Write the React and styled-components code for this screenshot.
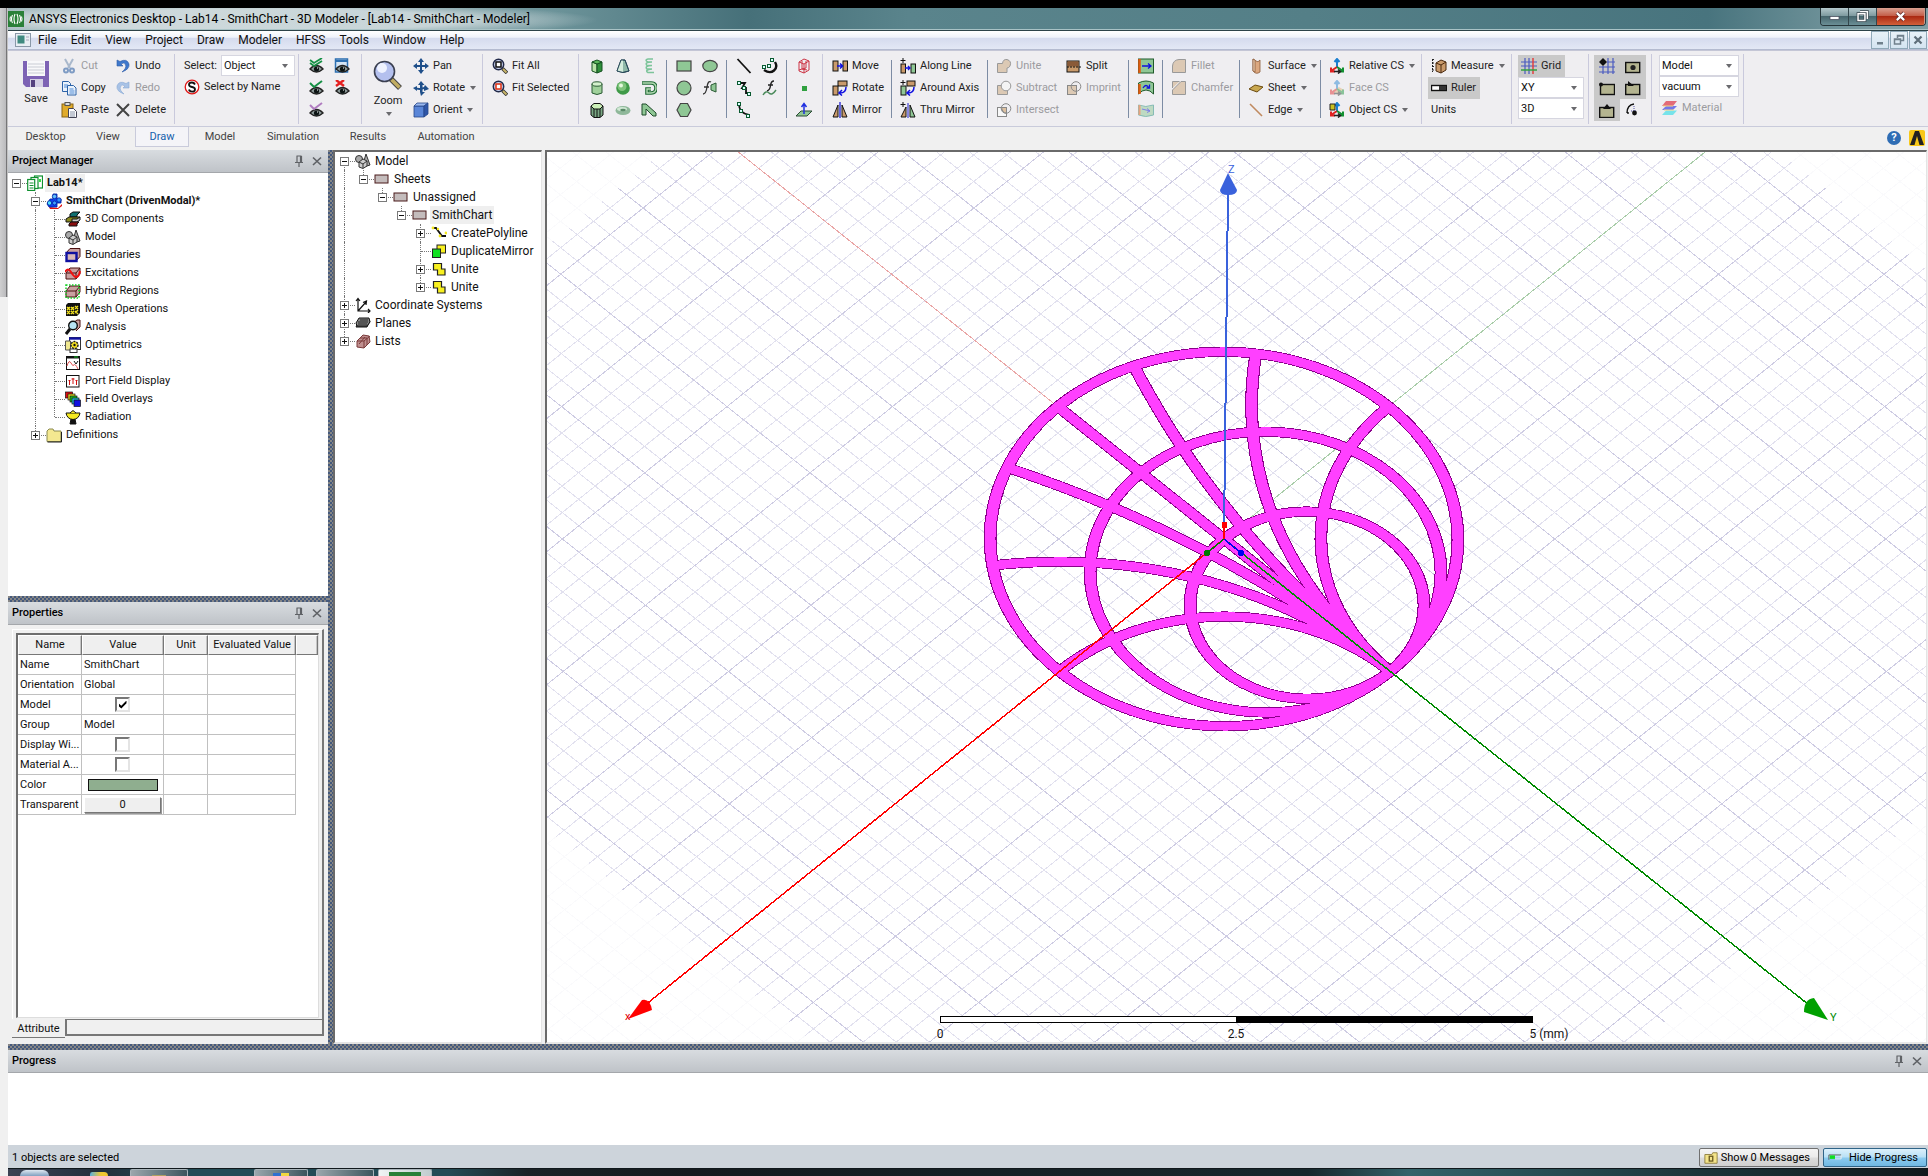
import React from "react";
import styled, { createGlobalStyle, css } from "styled-components";

const GlobalStyle = createGlobalStyle`
  * { box-sizing: border-box; }
  html, body, #root { height: 100%; margin: 0; }
  body {
    background: #f0f0f0;
    color: #111;
    font: 11px/16px Roboto, "Liberation Sans", sans-serif;
    overflow: hidden;
  }
  button, select, input { font: inherit; color: inherit; margin: 0; }
  svg { display: block; flex: none; }
`;

/* ---------------------------------------------------------------- icons */

const G = "#8fc795";
const T = "#c99a6b";
const eye = (
  <g>
    <path d="M2 11Q8.500 4 15 11Q8.500 17 2 11Z" fill="#8f9c9c" stroke="#222" strokeWidth="1.400" />
    <circle cx="8.500" cy="11" r="2.600" fill="#0c1414" />
    <path d="M9 10h1" stroke="#fff" />
  </g>
);
const lens = (fill) => (
  <g>
    <circle cx="6.5" cy="6.500" r="5.200" fill="#c9d3f0" stroke="#222a4a" strokeWidth="1.500" />
    <path d="M10.500 10.500L15 15" stroke="#333" strokeWidth="3.500" />
    <path d="M11 11L14.500 14.500" stroke="#c9b66a" strokeWidth="2" />
    {fill && <rect x="4" y="4" width="5" height="5" fill="#fff" stroke={fill} strokeWidth="1.500" />}
  </g>
);
const node = (x, y) => <rect x={x - 1.5} y={y - 1.5} width="3" height="3" fill="#dff" stroke="#0a5a30" />;
const plus = <path d="M3 0v5M.5 2.500h5" stroke="#111" />;
const csAxes = (
  <g fill="none" strokeWidth="2">
    <path d="M8 10V2M5.500 4L8 1l2.500 3" stroke="#1a7fd0" />
    <path d="M8 9l-6 4M2 9.500V13.500h4" stroke="#e02020" />
    <path d="M8 9l6 4M14 9.500v4h-4" stroke="#109030" />
    <path d="M5 13.500h6M9 11.500l2.500 2-2.500 2" stroke="#222" strokeWidth="1.500" />
  </g>
);
const redBlock = (
  <g fill="#c9a0a0" stroke="#4a1010">
    <path d="M1 8L5 3H15V9L11 14H1Z" />
    <path d="M1 8H11L15 3M11 8V14" fill="none" />
  </g>
);

const ICONS = {
  cut: <g fill="none" strokeWidth="2"><path d="M4 1l5 9M12 1L7 10" stroke="#a9b8cc" /><circle cx="5" cy="12.500" r="2" stroke="#7f9cc4" /><circle cx="11" cy="12.500" r="2" stroke="#7f9cc4" /></g>,
  copy: <g stroke="#2d63a8" fill="#eaf2fc"><path d="M1.500 1.500h6l2 2v8h-8z" /><path d="M6.500 5.500h6l2.500 2.500v7h-8.500z" /><path d="M3 5h4M3 7h3M8.500 9h4M8.500 11h5M8.500 13h5" stroke="#4f8ad4" /></g>,
  paste: <g><rect x="1" y="2" width="11" height="13" fill="#e0ab2b" stroke="#8a6414" /><rect x="4" y="0.500" width="5" height="3" fill="#ddd" stroke="#555" /><path d="M7.500 6.500h5l3 3v6h-8z" fill="#fff" stroke="#445" /><path d="M9 10h5M9 12h5M9 14h5" stroke="#8893a8" /></g>,
  undo: <path d="M2 2v6h6L6 6Q9 4 10.500 6.500Q12 10 7 14Q15 11 14 6Q12 0 5 3.500Z" fill="#3f78cc" stroke="#2d5aa6" strokeWidth=".6" />,
  redo: <path d="M14 2v6H8L10 6Q7 4 5.500 6.500Q4 10 9 14Q1 11 2 6Q4 0 11 3.500Z" fill="#a8c2e6" stroke="#88a8d4" strokeWidth=".6" />,
  del: <path d="M2 2L14 14M14 2L2 14" stroke="#444" strokeWidth="2" />,
  selName: <g><circle cx="8" cy="8" r="6.800" fill="#fff" stroke="#e01818" strokeWidth="1.300" /><path d="M11 5.500Q10 3.500 8 3.500Q5 3.500 5 5.700Q5 7.400 8 8Q11 8.600 11 10.400Q11 12.600 8 12.600Q5.500 12.600 5 10.500" fill="none" stroke="#111" strokeWidth="1.800" /></g>,
  eyeAll: <g>{eye}<path d="M2 5l4 3 8-5M2 2l4 3 8-5" fill="none" stroke="#159045" strokeWidth="1.800" /></g>,
  eyeOne: <g>{eye}<path d="M2 3l4 4 8-6" fill="none" stroke="#159045" strokeWidth="2" /></g>,
  eyeVio: <g>{eye}<path d="M2 3l4 4 8-6" fill="none" stroke="#b07cc0" strokeWidth="2" /></g>,
  eyeWin: <g><rect x="1.500" y="1" width="12" height="13" fill="#d4e4f4" stroke="#2d6fb0" strokeWidth="1.500" /><path d="M2 3h11" stroke="#2d6fb0" strokeWidth="2" />{eye}</g>,
  eyeDel: <g>{eye}<path d="M2 0l8 6M10 0L2 6" stroke="#e42020" strokeWidth="2.400" /></g>,
  pan: <g fill="#1f4f8a"><path d="M7 3h2v10H7zM3 7h10v2H3z" /><path d="M8 0l3 4H5zM8 16l3-4H5zM0 8l4-3v6zM16 8l-4-3v6z" /></g>,
  rotView: <g fill="#1f4f8a"><path d="M5 5L8 1l3.500 4H9.500v7H7V5zM12 5l4 4-5 2V9Q6 11 3 9l-1-2q4 2 9 0z" /><path d="M0 8l4-2v5zM7 12h5l-4 4z" /></g>,
  orient: <g stroke="#27468c" strokeWidth=".8"><path d="M1 4h10v11H1z" fill="#5a86d8" /><path d="M1 4l3-3h11l-4 3z" fill="#9ab8ee" /><path d="M15 1v11l-4 3V4z" fill="#2f56a8" /></g>,
  fitAll: lens("#111"),
  fitSel: lens("#e03010"),
  box: <g stroke="#145020"><path d="M3 4l5 2v9l-5-2z" fill="#b8e2a8" /><path d="M8 6l5-2v9l-5 2z" fill="#2f8f3a" /><path d="M3 4l5-2 5 2-5 2z" fill="#5cb85c" /></g>,
  cone: <g stroke="#2a4a5a"><path d="M6 2h4l4 11q-6 3-12 0z" fill="#8fb8a8" /><path d="M6 2h2v12q-4 0-6-1z" fill="#d4ecdc" stroke="none" /><path d="M6 2h4l4 11q-6 3-12 0z" fill="none" /></g>,
  helix: <path d="M12 1H7Q3 2 7 4H11M11 4Q3 4 6 7.500H11M11 7.500Q3 8 6 11H11M11 11Q3 12 7 14.500H13" fill="none" stroke="#7cc49a" strokeWidth="1.500" />,
  cyl: <g stroke="#2a5a34"><path d="M3 4v9q5 3 10 0V4" fill="#9fd09a" /><ellipse cx="8" cy="4" rx="5" ry="2.200" fill="#d4f0cc" /></g>,
  sphere: <g><circle cx="8" cy="8" r="6.800" fill="#3f9a48" /><circle cx="7" cy="6.500" r="4.500" fill="#7fc47c" /><circle cx="6" cy="5.500" r="2" fill="#e4f8dc" /></g>,
  spiral: <g fill="none"><path d="M1 3h9q5 0 5 5t-5 5H6V9h4" stroke="#1f6a34" strokeWidth="3.600" /><path d="M1.500 3H10q5 0 5 5t-5 5H6V9h4" stroke="#b4dcb4" strokeWidth="1.400" /></g>,
  prism: <g stroke="#111"><path d="M2 4v9l3 2.500h6l3-2.500V4" fill="#7aa884" /><path d="M5 7v8M8 7v8M11 7v8" /><path d="M2 4l3-2.500h6L14 4l-3 3H5z" fill="#ccf0b8" /></g>,
  torus: <g><ellipse cx="8" cy="8.500" rx="7.500" ry="4.500" fill="#8fb89a" /><ellipse cx="7" cy="7" rx="5" ry="2" fill="#d0e8d4" /><ellipse cx="8" cy="8" rx="2.800" ry="1.200" fill="#5a8a68" /></g>,
  bend: <path d="M1 13V2h4l10 9v3h-3L5 7v6z" fill={G} stroke="#1f4a2a" />,
  rect: <rect x="1" y="3" width="14" height="10" fill={G} stroke="#444" strokeWidth="1.200" />,
  ellipse: <ellipse cx="8" cy="8" rx="7.200" ry="5.600" fill={G} stroke="#444" strokeWidth="1.200" />,
  circle: <circle cx="8" cy="8" r="7" fill={G} stroke="#444" strokeWidth="1.200" />,
  fxSurf: <g><path d="M9 5l5-2v9l-5-2z" fill={G} stroke="#2a5a34" /><path d="M1 14Q4 14 5 7T9 2M2 7h5" fill="none" stroke="#333" strokeWidth="1.300" /></g>,
  hexa: <path d="M4.500 1.500h7L15 8l-3.500 6.500h-7L1 8z" fill={G} stroke="#444" strokeWidth="1.200" />,
  line: <path d="M1.500 1L14.500 15" stroke="#111" strokeWidth="1.800" />,
  arc3: <g><path d="M13 4q3 5-1 8.500T2 12" fill="none" stroke="#111" strokeWidth="2.400" />{node(10, 2)}{node(2, 9)}{node(7, 8)}</g>,
  spline: <g><path d="M3 3h6l-3 5h4v5h4" fill="none" stroke="#111" strokeWidth="1.800" />{node(3, 3)}{node(8, 8)}{node(13, 14)}</g>,
  fxCurve: <g fill="none"><path d="M5 11Q8 10 8.500 5.500T12 1M6 5h5" stroke="#222" strokeWidth="1.400" /><path d="M1 15q3-5 6-2t7-3" stroke="#4a8a5a" strokeWidth="1.400" /></g>,
  arcC: <g><path d="M3 2q0 9 10 11" fill="none" stroke="#111" strokeWidth="1.800" />{node(3, 2)}{node(5, 9)}{node(12, 14)}</g>,
  cage: <g fill="none" stroke="#cc3344"><path d="M3 4l5-3 5 2v9l-5 3-5-2zM3 4l5 2 5-3M8 6v9" /><path d="M6 3v8l4-1V3M3 12l3-1 5 1" /></g>,
  point: <rect x="6" y="6" width="5" height="5" fill="#30a040" />,
  plane: <g><path d="M5 9h11l-5 5H0z" fill={G} stroke="#2a4a34" /><path d="M8 12V3M5.500 5L8 1.500 10.500 5" fill="none" stroke="#2030e0" strokeWidth="1.500" /></g>,
  move: <g stroke="#111"><rect x="1" y="3" width="5" height="10" fill={T} /><rect x="11" y="3" width="4.500" height="10" fill={T} /><path d="M5 8h6M8 5.500L10.500 8 8 10.500" stroke="#1010e0" strokeWidth="1.500" fill="none" /></g>,
  rotate: <g stroke="#111"><rect x="6" y="1" width="9" height="5" fill={T} /><rect x="1" y="6" width="5" height="9" fill={T} /><path d="M14 7q0 6-6 6M10 10l-3 3 3 2.500" stroke="#1010e0" strokeWidth="1.500" fill="none" /></g>,
  mirror: <g><path d="M6 3v12H1z" fill={T} stroke="#111" /><path d="M10 3v12h5z" fill={T} stroke="#111" /><path d="M8 0v16" stroke="#2020d0" strokeWidth="1.300" /></g>,
  dupLine: <g stroke="#111">{plus}<rect x="1" y="6" width="4.500" height="9" fill={T} /><rect x="11" y="6" width="4.500" height="9" fill={G} /><path d="M5 10h5M8 8l2 2-2 2" stroke="#1010e0" fill="none" strokeWidth="1.300" /></g>,
  dupAxis: <g stroke="#111">{plus}<rect x="7" y="1" width="8" height="5" fill={T} /><rect x="1" y="6" width="5" height="9" fill={G} /><path d="M14 7q0 6-6 6M10 10l-3 3 3 2.500" stroke="#1010e0" strokeWidth="1.500" fill="none" /></g>,
  dupMirror: <g>{plus}<path d="M6 5v10H1z" fill={T} stroke="#111" /><path d="M10 3v12h5z" fill={G} stroke="#111" /><path d="M8 1v15" stroke="#2020d0" /></g>,
  unite: <path d="M1.500 5.500h5Q7 1 11 1.500Q16 3 14 8Q13 10 11 10v4.500H1.500z" fill="#dcc9b4" stroke="#999" />,
  subtract: <g stroke="#999"><path d="M1.500 5.500h10v9h-10z" fill="#dcc9b4" /><circle cx="10" cy="6" r="4.800" fill="#f4f4f4" /></g>,
  intersect: <g stroke="#888"><rect x="1.500" y="5.500" width="9" height="9" fill="#f8f8f8" /><circle cx="10" cy="6.500" r="4.800" fill="none" /><path d="M5.500 5.500h5v5.500q-4 0-5-5.500z" fill="#dcc0a0" /></g>,
  imprint: <g stroke="#888"><rect x="1.500" y="5.500" width="9" height="9" fill="#dcc9b4" /><circle cx="10" cy="6.500" r="4.800" fill="none" /></g>,
  split: <g><rect x="1" y="3" width="12" height="11" fill={T} stroke="#111" /><rect x="1.500" y="3.500" width="11" height="5" fill="#8a5a38" /><path d="M1 9h15" stroke="#111" strokeDasharray="2 1" /></g>,
  sweepA: <g><rect x=".5" y="1" width="15" height="14" fill={G} stroke="#1f5a2a" /><path d="M1.500 1v14" stroke="#e05a10" strokeWidth="2.500" /><path d="M4 8h9M10 5.500L13 8l-3 2.500" stroke="#1010e0" fill="none" strokeWidth="1.300" /></g>,
  sweepB: <g><path d="M.5 3Q8-1 15.500 3V14Q12 10 8 10T.5 14z" fill={G} stroke="#1f5a2a" /><path d="M1.500 4v10" stroke="#e05a10" strokeWidth="2.500" /><path d="M5 8q3-5 6 0M11.500 4.500V8H8.500" stroke="#1010e0" fill="none" strokeWidth="1.300" /></g>,
  sweepC: <g opacity=".5"><path d="M.5 3q7 3 15 0v10q-8 3-15 0z" fill={G} stroke="#1f8a7a" /><path d="M1.500 3v10" stroke="#e05a10" strokeWidth="2" /><path d="M4 7l8 2M9 6.500l3 2.500-3 1.500" stroke="#1010e0" fill="none" /></g>,
  fillet: <path d="M1.500 14.500V8Q2 2 8 1.500h6.500v13z" fill="#dcc9b4" stroke="#999" />,
  chamfer: <path d="M1.500 14.500V10L10 1.500h4.500v13z M1.500 8V1.500h7" fill="#dcc9b4" stroke="#999" />,
  surface: <g stroke="#8a5a3a" strokeWidth=".8"><path d="M5 1v12q3 4 7 1V2q-2 3-4 1z" fill="#dca880" /><path d="M5 1v12l2 1V2z" fill="#f4d8bc" /></g>,
  sheet: <path d="M1 9l6-4 8 2-6 5z" fill="#c9a850" stroke="#6a4a10" />,
  edge: <path d="M2 2L14 14" stroke="#c08a60" strokeWidth="1.600" />,
  relCS: csAxes,
  faceCS: <g opacity=".45"><path d="M3 11l7-4 5 3-6 5z" fill="#e0b070" />{csAxes}</g>,
  objCS: <g>{csAxes}<path d="M1 2h5v6H1z" fill="#c9c020" stroke="#222" /></g>,
  measure: <g><path d="M1 1.500h2M1 5h2M1 8.500h2M1 12h2M1.500 1v13" stroke="#222" strokeDasharray="2 1" /><path d="M5 5l5-3 5 2v8l-5 3-5-2z" fill={T} stroke="#4a2a10" /><path d="M5 5l5 2 5-3M10 7v8" stroke="#4a2a10" fill="none" /></g>,
  ruler: <g><rect x=".5" y="5.500" width="15" height="5" fill="#fff" stroke="#111" strokeWidth="1.400" /><rect x="8" y="6" width="7" height="4" fill="#333" /></g>,
  grid: <g strokeWidth="1.200"><path d="M4 0v16M8 0v16M0 4h16M0 8h16" stroke="#4a5ac0" /><path d="M12 0v16" stroke="#e04040" strokeWidth="1.500" /><path d="M0 12h16" stroke="#30a040" strokeWidth="1.500" /></g>,
  snapGrid: <g><path d="M9 0v16M14 0v16M4 8v8M8 4h8M0 9h16M0 14h16" stroke="#4a5ac0" strokeWidth="1.200" /><path d="M4 0l4 4-4 4-4-4z" fill="#111" /></g>,
  snapC: <g><rect x=".7" y="4.500" width="14" height="10" fill="#b4b490" stroke="#111" strokeWidth="1.400" /><circle cx="8" cy="9.500" r="2.600" fill="#222" /></g>,
  snapV: <g><rect x="1.500" y="4.500" width="14" height="10" fill="#b4b490" stroke="#111" strokeWidth="1.400" /><circle cx="2" cy="4.500" r="2" fill="#111" /></g>,
  snapE: <g><rect x=".7" y="4.500" width="14" height="10" fill="#b4b490" stroke="#111" strokeWidth="1.400" /><path d="M3 1l6 5H3z" fill="#111" /></g>,
  snapM: <g><rect x=".7" y="5.500" width="14" height="10" fill="#b4b490" stroke="#111" strokeWidth="1.400" /><path d="M8 2l4 5H4z" fill="#111" /></g>,
  snapQ: <g><path d="M2 11Q2 3 9 2M3 12v-2" fill="none" stroke="#111" strokeWidth="1.400" /><path d="M6 9h6M9 4v8" stroke="#55a" strokeDasharray="1 1" /><circle cx="9.500" cy="11" r="2.400" fill="#111" /></g>,
  material: <g opacity=".75"><path d="M4 1h11l-4 5H0z" fill="#e04050" /><path d="M4 6h11l-4 4H0z" fill="#4a50e8" /><path d="M4 10.500h11l-4 4.500H0z" fill="#50e0e8" /><path d="M1 6h10M2 10h10" stroke="#f4d060" /></g>,

  project: <g fill="#fff" stroke="#109030" strokeWidth="1.200"><rect x="7.500" y="1" width="8" height="12" /><rect x="4" y="2.500" width="7" height="11" /><rect x=".7" y="4.500" width="7" height="11" /><path d="M2.500 8h4M2.500 10.500h4M2.500 13h4" /><path d="M12 4h2v3h-2z" fill="#30e040" stroke="none" /></g>,
  design: <g stroke="#0020a0" strokeWidth=".8"><path d="M3 14l9 1 4-4v2l-4 3-8 0z" fill="#e01010" stroke="none" /><path d="M7 1h4v5h4v4h-4v4H7l-4 0-2-3 3-5h3z" fill="#1040f0" /><circle cx="8.500" cy="3.500" r="2.200" fill="#60c0ff" /><circle cx="13" cy="7" r="2.200" fill="#3090ff" /><circle cx="3.500" cy="10" r="2.200" fill="#50e0ff" /><circle cx="8.500" cy="10" r="2" fill="#40a0ff" /></g>,
  comps: <g stroke="#111"><path d="M5 3l3-2h7l-3 3v2H5z" fill="#107070" /><path d="M1 8l3-2h11l-3 3v2H1z" fill="#8a8a20" /><path d="M7 8h5l3-2v3l-3 2H7z" fill="#ccc" /><path d="M4 13l2-2h8l-2 2v2H4z" fill="#8a1010" /></g>,
  solids: <g stroke="#333" fill="#aaa"><path d="M11 1l4 11-6 2-1-3z" /><circle cx="4" cy="6" r="3.500" /><path d="M4 9l4-3 4 2v5l-4 2.500L4 14z" fill="#ccc" /><path d="M4 9l4 2 4-3M8 11v4" fill="none" /></g>,
  bounds: <g><path d="M1 6l4-4.500h10v8L11 14" fill="#c9a0a0" stroke="#4a1010" /><rect x="1.500" y="6" width="10" height="8" fill="#d8b8b8" stroke="#1010a0" strokeWidth="2.400" /></g>,
  excite: <g>{redBlock}<path d="M0 7q3-5 6 0t5 5q3 0 4-6" fill="none" stroke="#f01010" strokeWidth="2" /></g>,
  hybrid: <g>{redBlock}<rect x="1" y="2" width="13" height="13" fill="none" stroke="#10d020" strokeWidth="1.500" strokeDasharray="1.500 1.500" /></g>,
  mesh: <g><path d="M1 4l2-2h12v10l-3 3H1z" fill="#111" /><path d="M2 6l3 3M5 6L2 9M6 6l3 3M9 6L6 9M2 10l3 3M5 10l-3 3M6 10l3 3M9 10l-3 3M10 5l3 3M13 5l-3 3M10 10l3 3M13 9l-3 3" stroke="#f0e020" strokeWidth="1.400" /></g>,
  analysis: <g><path d="M8 4l4-3h3v7l-4 4" fill="#c9a0a0" stroke="#4a1010" /><circle cx="8" cy="6.500" r="4.300" fill="#b8e4f4" stroke="#111" strokeWidth="1.400" /><path d="M5 10L1 15" stroke="#111" strokeWidth="3" /></g>,
  opti: <g><rect x="4.500" y=".5" width="11" height="12" fill="#fff" stroke="#333" /><path d="M4 1.500h12" stroke="#1010a0" strokeWidth="2.400" /><path d="M.5 4h5v9h-5z" fill="#f0e890" stroke="#555" /><rect x="5" y="12" width="7" height="3.500" fill="#fff" stroke="#333" /><circle cx="9.500" cy="8" r="3.500" fill="#f4e020" stroke="#222" strokeDasharray="2 1" strokeWidth="1.500" /><circle cx="9.500" cy="8" r="1.200" /></g>,
  results: <g><rect x="1.500" y="1.500" width="13" height="13" fill="#fff" stroke="#111" /><path d="M2 2.500h12" stroke="#111" strokeWidth="2" /><path d="M9 2h4" stroke="#10c020" /><path d="M2 11q2-7 4-3t3 2 4 4" fill="none" stroke="#e05050" /><path d="M9 6l2 3 2-3" fill="none" stroke="#111" /></g>,
  port: <g><rect x="1.500" y="2.500" width="12.500" height="11.500" fill="#fff" stroke="#111" /><path d="M4.500 7v5M8 5v6M11.500 7v5M3.500 7.500h2M6.500 6h3M10.500 7.500h2" stroke="#d01010" /></g>,
  overlays: <g stroke="#111" strokeWidth=".7"><rect x=".5" y="1" width="7" height="6" fill="#e01010" /><rect x="3" y="3" width="7" height="6" fill="#f0e020" /><rect x="5" y="5" width="7" height="6" fill="#20c020" /><rect x="7" y="7" width="7" height="6" fill="#20c0e0" /><rect x="9" y="9" width="6.500" height="6.500" fill="#1010e0" /></g>,
  radiation: <g stroke="#111"><path d="M6 10h4l1 5H5z" fill="#111" /><path d="M1 4h14q-1 6-7 6.500Q2 10 1 4z" fill="#f4e820" /><path d="M5 4l3-2.500L11 4" fill="#f4e820" /></g>,
  folder: <g><path d="M1 4l2-2h4l1 2h7v10.500H1z" fill="#f4e890" stroke="#8a8a50" /><path d="M1.500 15h14V5" fill="none" stroke="#222" /></g>,
  sheetObj: <rect x="1" y="4" width="13" height="8" fill="#c4bcbc" stroke="#4a1a1a" />,
  poly: <g><path d="M2 3h3l6 8h4" fill="none" stroke="#111" strokeWidth="1.800" /><circle cx="2" cy="3" r="1.400" fill="#f4e820" /><circle cx="7" cy="4" r="1.200" fill="#f4e820" /><circle cx="9" cy="11" r="1.400" fill="#f4e820" /><circle cx="15" cy="8" r="1.400" fill="#f4e820" /></g>,
  dupObj: <g stroke="#222"><rect x="6" y="2" width="8.500" height="8" fill="#f8f020" /><rect x="1.500" y="6" width="8" height="8.500" fill="#10e020" /></g>,
  uniteObj: <path d="M2.500 2.500h8v5.500h3.500v6H6.500V9h-4z" fill="#f8f020" stroke="#222" strokeWidth="1.200" />,
  coords: <path d="M3 14.500V2M1 4l2-2.500L5 4M3 14h12M13 12l2 2-2 2M3 14l8-9M8 5.500L11.500 4l-.5 4" fill="none" stroke="#111" strokeWidth="1.200" />,
  planes: <g stroke="#111"><path d="M4 6h11l-3 6H1z" fill="#777" /><path d="M4 3h10l1 4-3 4H2L1 8z" fill="#888" /><path d="M3 7h10M3 9h9M5 5h8" stroke="#222" /></g>,
  lists: <g stroke="#7a3a3a" fill="#c09090"><path d="M2 8l6-6 6 1 1 6-6 6-7-1z" /><path d="M2 8h7l6-5M9 8v7M5 5h7v7M4 11l6-7" fill="none" /></g>,
  messages: <g><path d="M1 4h8l1-2h5v12H1z" fill="#f4e48a" stroke="#8a7a3a" /><rect x="6" y="6" width="4" height="5.500" fill="none" stroke="#6a5a20" strokeWidth="1.500" /></g>,
  progress: <g><path d="M1 10V4.500h14" fill="none" stroke="#555" /><rect x="2" y="5" width="6" height="4" fill="#10e020" /><path d="M8 9h7V5" fill="none" stroke="#eee" /></g>,
  doc: <g><rect x=".5" y="1.500" width="15" height="13" fill="#e8eef4" stroke="#8a98a8" /><rect x="2.500" y="3.500" width="7" height="8" fill="#3f8a80" /><path d="M11 5h3M11 8h3" stroke="#aab" /></g>,
  logo: <g><rect width="16" height="16" fill="#2a8038" /><path d="M7 3q-2 5 0 10M4.500 4q-2 4 0 8M2.500 5.500q-1 2.500 0 5M9 3q2 5 0 10M11.500 4q2 4 0 8M13.500 5.500q1 2.500 0 5" fill="none" stroke="#fff" strokeWidth="1.100" /></g>,
  pin: <path d="M5.500 3h5M6 3v6M9.500 3v6M10.500 3v6M4 9.500h8M8 9.500V14" fill="none" stroke="#5f6266" strokeWidth="1.200" />,
  close: <path d="M4 4.500l8 7.500M12 4.500L4 12" stroke="#5f6266" strokeWidth="1.600" />,
  winMin: <rect x="2.500" y="8" width="11" height="3.500" fill="#fff" stroke="#445" strokeWidth=".8" />,
  winMax: <g><path d="M5 2h9v9M2.500 4.500h8.500v8.500H2.500z" fill="none" stroke="#39444c" strokeWidth="3.500" /><path d="M5 2h9v9M2.500 4.500h8.500v8.500H2.500z" fill="none" stroke="#fff" strokeWidth="1.800" /></g>,
  winX: <g><path d="M3.500 3.500l9 9M12.500 3.500l-9 9" stroke="#5a2020" strokeWidth="4.500" /><path d="M3.500 3.500l9 9M12.500 3.500l-9 9" stroke="#fff" strokeWidth="2.800" /></g>,
  mdiMin: <rect x="5" y="10" width="6" height="2.500" fill="#70808c" />,
  mdiMax: <path d="M6.500 6V3.500h6v5H10M3.500 7h6v5h-6zM3.500 7.500h6M6.500 4h6" fill="none" stroke="#70808c" strokeWidth="1.500" />,
  mdiX: <path d="M4.500 4.500l7 7M11.500 4.500l-7 7" stroke="#5f6e7a" strokeWidth="2.200" />,
};

const Icon = ({ name, size = 16 }) => (
  <svg width={size} height={size} viewBox="0 0 16 16" fill="#111" aria-hidden="true">
    {ICONS[name]}
  </svg>
);

const SaveIcon = () => (
  <svg width="28" height="28" viewBox="0 0 28 28" aria-hidden="true">
    <path d="M1 1h26v26H4l-3-3z" fill="#7d62b4" />
    <rect x="5" y="1" width="18" height="15" fill="#f8f8fa" />
    <path d="M6 4h16M6 7h16M6 10h16M6 13h16" stroke="#c9ccd4" />
    <rect x="8" y="19" width="13" height="8" fill="#d4cfe4" />
    <rect x="9" y="20" width="4" height="7" fill="#54407e" />
  </svg>
);
const ZoomIcon = () => (
  <svg width="30" height="30" viewBox="0 0 30 30" aria-hidden="true">
    <path d="M17 18L27 28" stroke="#444" strokeWidth="5.500" />
    <path d="M18 19L26.500 27.500" stroke="#c2ad62" strokeWidth="3.500" />
    <circle cx="11.500" cy="11.500" r="10" fill="#b4c0ee" stroke="#3a3f50" strokeWidth="1.600" />
    <circle cx="9" cy="8" r="5" fill="#eef2ff" />
  </svg>
);

/* --------------------------------------------------------------- window */

const Screen = styled.div`
  display: grid;
  grid-template: 8px 1fr 8px / 8px 1fr;
  height: 100%;
`;
const TopEdge = styled.div`grid-column: 1 / -1; background: #000;`;
const SideStrip = styled.div`
  grid-row: 2 / 4;
  background: linear-gradient(90deg, #cfcfd0, #bcbcbe 70%, #6e6e70 80%, #e8e8e8) 0 0 / 100% 289px no-repeat, #f0f0f0;
`;
const Window = styled.div`
  display: flex;
  flex-direction: column;
  min-width: 0;
  min-height: 0;
`;
const TitleBar = styled.header`
  display: flex;
  align-items: center;
  gap: 5px;
  height: 23px;
  flex: none;
  border-bottom: 1px solid #2c4248;
  box-shadow: inset 0 -1px #a9c3c6;
  background:
    radial-gradient(ellipse 340px 18px at 250px 12px, rgba(226, 232, 234, 0.75) 60%, rgba(226, 232, 234, 0) 100%),
    linear-gradient(90deg, #9db4b9 0, #6d949a 540px, #467079 740px, #5a848c 900px, #547f87 1300px, #48747e 1700px, #7d9da3 1870px);
`;
const TitleText = styled.h1`
  margin: 0;
  font-size: 12px;
  line-height: 18px;
  font-weight: 400;
  color: #000;
`;
const Caption = styled.div`
  display: flex;
  align-self: flex-start;
  margin: 0 2px 0 auto;
  height: 18px;
  border: 1px solid #26363b;
  border-top: 0;
  border-radius: 0 0 4px 4px;
  overflow: hidden;
`;
const CaptionButton = styled.button`
  display: grid;
  place-items: center;
  width: ${(p) => (p.$close ? 48 : 28)}px;
  padding: 0;
  border: 0;
  border-right: 1px solid ${(p) => (p.$close ? "#c98" : "#33474d")};
  background: ${(p) =>
    p.$close
      ? "linear-gradient(#d9a090, #c4604a 45%, #ab2a12 50%, #d2603a)"
      : "linear-gradient(#b4c8cc, #7f9ba0 45%, #47666d 50%, #6b8f96)"};
`;
const MenuBar = styled.nav`
  display: flex;
  align-items: center;
  height: 19px;
  flex: none;
  padding-left: 7px;
  background: linear-gradient(#fff 0, #eff2fa 35%, #d5dbee 40%, #e3e8f5);
  border-bottom: 1px solid #b4bbd0;
`;
const MenuItem = styled.button`
  padding: 0 7px;
  border: 0;
  background: none;
  font-size: 12px;
  color: #111;
`;
const MdiButtons = styled.div`
  display: flex;
  gap: 1px;
  margin-left: auto;
  padding-right: 1px;
`;
const MdiButton = styled.button`
  display: grid;
  place-items: center;
  width: 18px;
  height: 18px;
  padding: 0;
  border: 1px solid #8fa8b8;
  background: linear-gradient(#e8f1f8, #d4e4f1);
`;

/* --------------------------------------------------------------- ribbon */

const Ribbon = styled.div`
  display: flex;
  height: 77px;
  flex: none;
  padding-top: 3px;
  background: #efeef1;
  border-top: 1px solid #c4c6d6;
  border-bottom: 1px solid #c9cbdb;
`;
const Group = styled.section`
  display: flex;
  flex: none;
  width: ${(p) => p.$w}px;
  height: 70px;
  padding: 1px 0 0 ${(p) => p.$pad ?? 4}px;
  background: linear-gradient(
      ${(p) => (p.$inner ? "#7d8ca4, #7d8ca4" : "#c9c9dc, #c9c9dc")}
    )
    100% ${(p) => (p.$inner ? "6px" : "0")} / 1px ${(p) => (p.$inner ? "58px" : "100%")} no-repeat;
`;
const Column = styled.div`
  display: flex;
  flex-direction: column;
  align-items: flex-start;
  flex: none;
  ${(p) => p.$w && css`width: ${p.$w}px;`}
`;
const ToolButton = styled.button`
  display: flex;
  align-items: center;
  gap: 4px;
  height: 22px;
  padding: 0 ${(p) => (p.$on ? 4 : 0)}px 0 3px;
  border: 0;
  white-space: nowrap;
  line-height: 18px;
  background: ${(p) => (p.$on ? "#c9c9c9" : "none")};
  color: ${(p) => (p.disabled ? "#9b9b9f" : "#222")};
`;
const Caret = styled.span`
  width: 0;
  margin-left: 1px;
  border: 3px solid transparent;
  border-top: 4px solid #6a6a6e;
  border-bottom: 0;
`;
const IconCells = styled.div`
  display: grid;
  grid-auto-flow: column;
  grid-template-rows: repeat(3, 22px);
  grid-auto-columns: 26px;
`;
const IconButton = styled.button`
  display: grid;
  place-items: center;
  padding: 0;
  border: 0;
  background: ${(p) => (p.$on ? "#c9c9c9" : "none")};
`;
const BigButton = styled.button`
  display: flex;
  flex-direction: column;
  align-items: center;
  gap: 3px;
  width: ${(p) => p.$w}px;
  padding: 5px 0 0;
  border: 0;
  background: none;
  color: #222;
`;
const SelectLine = styled.label`
  display: flex;
  align-items: center;
  gap: 4px;
  padding-left: 3px;
  color: #222;
`;
const SelectBox = styled.span`
  display: grid;
  grid-template-columns: 1fr 10px;
  align-items: center;
  width: ${(p) => p.$w}px;
  height: 21px;
  padding-right: 3px;
  background: #fff;
  border: 1px solid #d6d6e0;
  select {
    grid-area: 1 / 1 / 2 / 3;
    appearance: none;
    width: 100%;
    padding: 0 2px;
    border: 0;
    background: none;
  }
  ${Caret} { grid-area: 1 / 2; }
`;

const Tool = ({ icon, label, caret, off, on }) => (
  <ToolButton disabled={off} $on={on}>
    {icon && <Icon name={icon} />}
    {label}
    {caret && <Caret />}
  </ToolButton>
);
const Choice = ({ value, w, name, id }) => (
  <SelectBox $w={w}>
    <select id={id} aria-label={name} defaultValue={value}>
      <option>{value}</option>
    </select>
    <Caret />
  </SelectBox>
);
const Cells = ({ icons, on = [] }) => (
  <IconCells>
    {icons.map((n) => (
      <IconButton key={n} aria-label={n} $on={on.includes(n)}><Icon name={n} /></IconButton>
    ))}
  </IconCells>
);

const RibbonBar = () => (
  <Ribbon>
    <Group $w={167} $pad={6}>
      <BigButton $w={44}><SaveIcon />Save</BigButton>
      <Column $w={54}>
        <Tool icon="cut" label="Cut" off />
        <Tool icon="copy" label="Copy" />
        <Tool icon="paste" label="Paste" />
      </Column>
      <Column>
        <Tool icon="undo" label="Undo" />
        <Tool icon="redo" label="Redo" off />
        <Tool icon="del" label="Delete" />
      </Column>
    </Group>
    <Group $w={124} $pad={6}>
      <Column>
        <SelectLine htmlFor="pick">
          Select:
          <Choice id="pick" value="Object" w={74} />
        </SelectLine>
        <Tool icon="selName" label="Select by Name" />
      </Column>
    </Group>
    <Group $w={63}><Cells icons={["eyeAll", "eyeOne", "eyeVio", "eyeWin", "eyeDel"]} /></Group>
    <Group $w={121} $pad={4}>
      <BigButton $w={44}><ZoomIcon />Zoom<Caret /></BigButton>
      <Column>
        <Tool icon="pan" label="Pan" />
        <Tool icon="rotView" label="Rotate" caret />
        <Tool icon="orient" label="Orient" caret />
      </Column>
    </Group>
    <Group $w={96} $pad={6}>
      <Column>
        <Tool icon="fitAll" label="Fit All" />
        <Tool icon="fitSel" label="Fit Selected" />
      </Column>
    </Group>
    <Group $w={88} $pad={5} $inner><Cells icons={["box", "cyl", "prism", "cone", "sphere", "torus", "helix", "spiral", "bend"]} /></Group>
    <Group $w={60} $inner><Cells icons={["rect", "circle", "hexa", "ellipse", "fxSurf"]} /></Group>
    <Group $w={60} $inner><Cells icons={["line", "spline", "arcC", "arc3", "fxCurve"]} /></Group>
    <Group $w={36}><Cells icons={["cage", "point", "plane"]} /></Group>
    <Group $w={69} $pad={6} $inner>
      <Column>
        <Tool icon="move" label="Move" />
        <Tool icon="rotate" label="Rotate" />
        <Tool icon="mirror" label="Mirror" />
      </Column>
    </Group>
    <Group $w={96} $pad={5} $inner>
      <Column>
        <Tool icon="dupLine" label="Along Line" />
        <Tool icon="dupAxis" label="Around Axis" />
        <Tool icon="dupMirror" label="Thru Mirror" />
      </Column>
    </Group>
    <Group $w={141} $pad={5} $inner>
      <Column $w={70}>
        <Tool icon="unite" label="Unite" off />
        <Tool icon="subtract" label="Subtract" off />
        <Tool icon="intersect" label="Intersect" off />
      </Column>
      <Column>
        <Tool icon="split" label="Split" />
        <Tool icon="imprint" label="Imprint" off />
      </Column>
    </Group>
    <Group $w={34} $inner><Cells icons={["sweepA", "sweepB", "sweepC"]} /></Group>
    <Group $w={77} $pad={5} $inner>
      <Column>
        <Tool icon="fillet" label="Fillet" off />
        <Tool icon="chamfer" label="Chamfer" off />
      </Column>
    </Group>
    <Group $w={81} $pad={5} $inner>
      <Column>
        <Tool icon="surface" label="Surface" caret />
        <Tool icon="sheet" label="Sheet" caret />
        <Tool icon="edge" label="Edge" caret />
      </Column>
    </Group>
    <Group $w={101} $pad={5}>
      <Column>
        <Tool icon="relCS" label="Relative CS" caret />
        <Tool icon="faceCS" label="Face CS" off />
        <Tool icon="objCS" label="Object CS" caret />
      </Column>
    </Group>
    <Group $w={90} $pad={6}>
      <Column>
        <Tool icon="measure" label="Measure" caret />
        <Tool icon="ruler" label="Ruler" on />
        <Tool label="Units" />
      </Column>
    </Group>
    <Group $w={77} $pad={6}>
      <Column>
        <Tool icon="grid" label="Grid" on />
        <Choice name="Drawing plane" value="XY" w={66} />
        <Choice name="Movement mode" value="3D" w={66} />
      </Column>
    </Group>
    <Group $w={63} $pad={5}>
      <Cells
        icons={["snapGrid", "snapV", "snapM", "snapC", "snapE", "snapQ"]}
        on={["snapGrid", "snapV", "snapM", "snapC", "snapE"]}
      />
    </Group>
    <Group $w={92} $pad={7}>
      <Column>
        <Choice name="Model type" value="Model" w={80} />
        <Choice name="Default material" value="vacuum" w={80} />
        <Tool icon="material" label="Material" off />
      </Column>
    </Group>
  </Ribbon>
);

const TabBar = styled.div`
  display: flex;
  align-items: flex-start;
  height: 23px;
  flex: none;
  padding-left: 2px;
`;
const Tab = styled.button`
  height: 20px;
  min-width: ${(p) => p.$w}px;
  padding: 1px 0 0;
  border: 1px solid ${(p) => (p.$active ? "#c9cbdb" : "transparent")};
  border-top: 0;
  background: ${(p) => (p.$active ? "#f4f4f8" : "none")};
  color: ${(p) => (p.$active ? "#1460ac" : "#444")};
`;
const HelpIcons = styled.div`
  display: flex;
  align-items: center;
  gap: 8px;
  height: 22px;
  margin: 0 3px 0 auto;
`;
const HelpButton = styled.button`
  width: 14px;
  height: 14px;
  padding: 0;
  border: 0;
  border-radius: 50%;
  background: #2f6db4;
  color: #fff;
  font-weight: 700;
  line-height: 14px;
`;

/* ---------------------------------------------------------------- docks */

const Work = styled.main`
  display: flex;
  flex: 1;
  min-height: 0;
`;
const dither = css`
  background-color: #868686;
  background-image:
    linear-gradient(#44597c 50%, transparent 50%), linear-gradient(transparent 50%, #44597c 50%);
  background-size: 1px 4px, 1px 4px;
  background-image: repeating-conic-gradient(#44597c 0 25%, #868686 0 50%);
  background-size: 4px 4px;
`;
const SplitV = styled.div`width: 5px; flex: none; ${dither}`;
const SplitH = styled.div`height: 6px; flex: none; ${dither}`;
const Dock = styled.aside`
  display: flex;
  flex-direction: column;
  width: 320px;
  flex: none;
`;
const PanelHead = styled.div`
  display: flex;
  align-items: center;
  gap: 2px;
  height: 23px;
  flex: none;
  padding: 0 3px 0 4px;
  background: linear-gradient(#d8dce0, #bfc3c8);
  border-bottom: 1px solid #a4a7ab;
`;
const PanelTitle = styled.h2`
  flex: 1;
  margin: 0;
  font-size: 11px;
  font-weight: 500;
  color: #000;
`;
const PlainButton = styled.button`
  padding: 0;
  border: 0;
  background: none;
`;
const Head = ({ title }) => (
  <PanelHead>
    <PanelTitle>{title}</PanelTitle>
    <PlainButton aria-label="Pin"><Icon name="pin" /></PlainButton>
    <PlainButton aria-label="Close"><Icon name="close" /></PlainButton>
  </PanelHead>
);
const TreePane = styled.div`
  height: 423px;
  flex: none;
  padding-top: 1px;
  background: #fff;
`;
const ModelPane = styled.div`
  width: 209px;
  flex: none;
  background: #fff;
  border: solid #6a6a6a;
  border-width: 2px 1px 2px 2px;
  border-right-color: #e4e4e4;
  border-bottom-color: #e4e4e4;
`;
const TreeList = styled.ul`
  margin: 0;
  padding: 0 0 0 ${(p) => p.$left}px;
  list-style: none;
  font-size: ${(p) => p.$size}px;
`;
const TreeRow = styled.li`
  display: flex;
  align-items: center;
  height: 18px;
`;
const Guide = styled.span`
  position: relative;
  width: 19px;
  height: 18px;
  flex: none;
  &::before {
    content: "";
    position: absolute;
    left: 8px;
    top: ${(p) => (p.$from ? 9 : 0)}px;
    height: ${(p) => (p.$line === "full" ? 18 : p.$line === "half" ? 9 : 0)}px;
    border-left: 1px dotted #777;
  }
  &::after {
    content: "";
    position: absolute;
    left: 9px;
    right: 0;
    top: 9px;
    border-top: ${(p) => (p.$own ? "1px dotted #777" : "0")};
  }
`;
const Expander = styled.button`
  position: absolute;
  z-index: 1;
  left: 4px;
  top: 5px;
  width: 9px;
  height: 9px;
  padding: 0;
  border: 1px solid #7a7a7a;
  background:
    linear-gradient(#111, #111) 50% 50% / 5px 1px no-repeat,
    ${(p) => (p.$open ? "linear-gradient(#fff, #fff)" : "linear-gradient(#111, #111) 50% 50% / 1px 5px no-repeat")},
    #fff;
`;
const TreeLabel = styled.span`
  margin-left: 2px;
  padding: 0 2px;
  line-height: 18px;
  white-space: nowrap;
  font-weight: ${(p) => (p.$bold ? 700 : 400)};
  background: ${(p) => (p.$sel ? "#efefef" : "none")};
`;

/* guides: one letter per level — f full line, h upper half, e empty, d lower half */
const Tree = ({ rows, left, size }) => (
  <TreeList $left={left} $size={size}>
    {rows.map(([guides, exp, icon, text, flag = ""], i) => (
      <TreeRow key={i}>
        {[...guides].map((g, k) => {
          const own = k === guides.length - 1;
          return (
            <Guide key={k} $own={own} $from={g === "d"} $line={{ f: "full", h: "half", d: "half" }[g]}>
              {own && exp && <Expander $open={exp === "-"} aria-label={exp === "-" ? "Collapse" : "Expand"} />}
            </Guide>
          );
        })}
        <Icon name={icon} />
        <TreeLabel $bold={flag.includes("b")} $sel={flag.includes("s")}>{text}</TreeLabel>
      </TreeRow>
    ))}
  </TreeList>
);

const PROJECT = [
  ["e", "-", "project", "Lab14*", "bs"],
  ["ef", "-", "design", "SmithChart (DrivenModal)*", "b"],
  ["eff", "", "comps", "3D Components"],
  ["eff", "", "solids", "Model"],
  ["eff", "", "bounds", "Boundaries"],
  ["eff", "", "excite", "Excitations"],
  ["eff", "", "hybrid", "Hybrid Regions"],
  ["eff", "", "mesh", "Mesh Operations"],
  ["eff", "", "analysis", "Analysis"],
  ["eff", "", "opti", "Optimetrics"],
  ["eff", "", "results", "Results"],
  ["eff", "", "port", "Port Field Display"],
  ["eff", "", "overlays", "Field Overlays"],
  ["efh", "", "radiation", "Radiation"],
  ["eh", "+", "folder", "Definitions"],
];
const MODEL = [
  ["d", "-", "solids", "Model"],
  ["fh", "-", "sheetObj", "Sheets"],
  ["feh", "-", "sheetObj", "Unassigned"],
  ["feeh", "-", "sheetObj", "SmithChart", "s"],
  ["feeef", "+", "poly", "CreatePolyline"],
  ["feeef", "", "dupObj", "DuplicateMirror"],
  ["feeef", "+", "uniteObj", "Unite"],
  ["feeeh", "+", "uniteObj", "Unite"],
  ["f", "+", "coords", "Coordinate Systems"],
  ["f", "+", "planes", "Planes"],
  ["h", "+", "lists", "Lists"],
];

/* ----------------------------------------------------------- properties */

const PropsBody = styled.div`
  display: flex;
  flex-direction: column;
  flex: 1;
  min-height: 0;
  padding: 4px 4px 6px 4px;
`;
const PropsFrame = styled.div`
  display: flex;
  flex: 1;
  min-height: 0;
  padding: 3px 3px 1px;
  border: 1px solid #fff;
  border-right: 2px solid #777;
  border-bottom: 0;
`;
const PropsSheet = styled.div`
  flex: 1;
  background: #fff;
  border: 2px solid #6e6e6e;
  border-right: 1px solid #ddd;
  border-bottom: 1px solid #ddd;
`;
const PropTable = styled.table`
  width: 100%;
  table-layout: fixed;
  border-collapse: separate;
  border-spacing: 0;
  th {
    height: 20px;
    padding: 0;
    font-weight: 400;
    background: #efefef;
    border: 1px solid #fff;
    border-right: 1px solid #777;
    border-bottom: 1px solid #777;
    box-shadow: inset -1px 0 #c4c4c4;
    white-space: nowrap;
  }
  td {
    height: 20px;
    padding: 0 2px;
    line-height: 18px;
    border-right: 1px solid #c0c0c0;
    border-bottom: 1px solid #c0c0c0;
    white-space: nowrap;
    overflow: hidden;
  }
  td:last-child { border: 0; }
`;
const Check = styled.input`
  appearance: none;
  display: grid;
  place-items: center;
  width: 15px;
  height: 15px;
  margin: 0 auto;
  background: #fff;
  border: 2px solid;
  border-color: #777 #e4e4e4 #e4e4e4 #777;
  &:checked::after {
    content: "";
    width: 8px;
    height: 8px;
    background: #000;
    clip-path: polygon(0 35%, 35% 65%, 100% 0, 100% 35%, 35% 100%, 0 70%);
  }
`;
const Swatch = styled.button`
  display: block;
  width: 70px;
  height: 12px;
  margin: 0 auto;
  padding: 0;
  border: 1px solid #111;
  background: #8fae8f;
`;
const ZeroButton = styled.button`
  display: block;
  width: 100%;
  height: 16px;
  padding: 0;
  line-height: 12px;
  background: #efefef;
  border: 1px solid;
  border-color: #fff #777 #777 #fff;
  box-shadow: 1px 1px #999;
`;
const TabStrip = styled.div`
  display: flex;
  height: 19px;
  flex: none;
`;
const AttrTab = styled.button`
  width: 53px;
  padding: 2px 0 0;
  border: 0;
  border-bottom: 1px solid #777;
  background: #f0f0f0;
`;
const TabRest = styled.div`
  flex: 1;
  height: 17px;
  border: 2px solid #777;
  border-top-width: 1px;
`;

const PROPS = [
  ["Name", "SmithChart"],
  ["Orientation", "Global"],
  ["Model", <Check key="c" type="checkbox" defaultChecked aria-label="Model" />],
  ["Group", "Model"],
  ["Display Wi...", <Check key="c" type="checkbox" aria-label="Display Wireframe" />],
  ["Material A...", <Check key="c" type="checkbox" aria-label="Material Appearance" />],
  ["Color", <Swatch key="c" aria-label="Color" />],
  ["Transparent", <ZeroButton key="c">0</ZeroButton>],
];

const Properties = () => (
  <PropsBody>
    <PropsFrame>
      <PropsSheet>
        <PropTable>
          <colgroup>
            <col width="64" /><col width="82" /><col width="44" /><col width="88" /><col />
          </colgroup>
          <thead>
            <tr><th>Name</th><th>Value</th><th>Unit</th><th>Evaluated Value</th><th /></tr>
          </thead>
          <tbody>
            {PROPS.map(([k, v]) => (
              <tr key={k}><td>{k}</td><td>{v}</td><td /><td /><td /></tr>
            ))}
          </tbody>
        </PropTable>
      </PropsSheet>
    </PropsFrame>
    <TabStrip><AttrTab>Attribute</AttrTab><TabRest /></TabStrip>
  </PropsBody>
);

/* ------------------------------------------------------------- viewport */

const Viewport = styled.section`
  flex: 1;
  min-width: 0;
  margin: 0 1px 0 3px;
  background: #fff;
  border: 2px solid #6a6a6a;
  border-right: 1px solid #e4e4e4;
  border-bottom: 2px solid #e8e8e8;
  svg { width: 100%; height: 100%; font-family: Roboto, "Liberation Sans", sans-serif; }
`;

const LIMIT = 6.3;
const FAR = 14;
const hatch = (step, limit, skip) => {
  const n = Math.floor(limit / step + 0.001);
  let d = "";
  for (let i = -n; i <= n; i++) {
    if (skip && i % skip === 0) continue;
    const p = (i * step).toFixed(2);
    d += `M${p} ${-limit}V${limit}M${-limit} ${p}H${limit}`;
  }
  return d;
};
/* constant-reactance arc: circle of radius rho through (0,2), cut at the unit circle */
const reactance = (rho, side) => {
  const end = 2 * Math.atan(2 / rho);
  const pts = [];
  for (let i = 0; i <= 24; i++) {
    const t = (end * i) / 24;
    pts.push(`${(side * rho * (1 - Math.cos(t))).toFixed(3)},${(2 - rho * Math.sin(t)).toFixed(3)}`);
  }
  return pts.join(" ");
};
const Traces = ({ color, width }) => (
  <g fill="none" stroke={color} strokeWidth={width} strokeLinejoin="round">
    <circle r="2" />
    <circle cy="0.5" r="1.5" />
    <circle cy="1" r="1" />
    <path d="M0 -2V2" />
    {[2, 4, 10].map((rho) => (
      <React.Fragment key={rho}>
        <polyline points={reactance(rho, 1)} />
        <polyline points={reactance(rho, -1)} />
      </React.Fragment>
    ))}
  </g>
);
const PLANE = "matrix(-82.3 66.2 83.1 66.2 0 0)";

const Scene = () => (
  <svg viewBox="-677 -387 1379 890" preserveAspectRatio="xMidYMid slice" role="img" aria-label="3D model view">
    <g shapeRendering="crispEdges">
      <g transform={PLANE} fill="none" strokeWidth="1">
        <path d={hatch(0.2, FAR)} stroke="#fafafc" vectorEffect="non-scaling-stroke" />
        <path d={hatch(0.2, LIMIT, 5)} stroke="#e2e1ef" vectorEffect="non-scaling-stroke" />
        <path d={hatch(1, LIMIT)} stroke="#cecce3" vectorEffect="non-scaling-stroke" />
        <path d={`M0 0V${-LIMIT}`} stroke="#eaa6a6" vectorEffect="non-scaling-stroke" />
        <path d={`M0 0H${-LIMIT}`} stroke="#a9cda9" vectorEffect="non-scaling-stroke" />
      </g>
      <g transform={PLANE}>
        <Traces color="#8a008a" width={0.11} />
        <Traces color="#ff40ff" width={0.092} />
      </g>
      <path d="M0 0L-580 467" stroke="#f00" strokeWidth="1.500" />
      <path d="M0 0L590 470" stroke="#008a00" strokeWidth="1.500" />
      <path d="M0 -4L4 -350" stroke="#3a62dc" strokeWidth="2" />
      <g strokeWidth="1.500">
        <path d="M0 0L-17 14" stroke="#007a00" />
        <path d="M0 0L17 14" stroke="#0000f0" />
        <path d="M0 0V-14" stroke="#f00" />
      </g>
      <circle cx="-17" cy="14" r="3" fill="#007a00" />
      <circle cx="17" cy="14" r="3" fill="#0000f0" />
      <rect x="-2" y="-17" width="5" height="6" fill="#f00" />
    </g>
    <path d="M4 -366L-4 -349Q-4 -344 4 -344Q13 -344 13 -349Z" fill="#3a62dc" />
    <path d="M-596 480L-582 461Q-574 459 -572 471Z" fill="#f00" />
    <path d="M604 481L580 473Q580 460 590 459Z" fill="#00a000" />
    <g fontSize="11">
      <text x="4" y="-366" fill="#3a62dc">Z</text>
      <text x="-599" y="481" fill="#e00000">x</text>
      <text x="606" y="482" fill="#008a00">Y</text>
    </g>
    <rect x="-283.500" y="477.500" width="592" height="6" fill="#fff" stroke="#000" />
    <rect x="12" y="477" width="297" height="7" fill="#000" />
    <g fontSize="12" fill="#111" textAnchor="middle">
      <text x="-284" y="499">0</text>
      <text x="12" y="499">2.5</text>
      <text x="325" y="499">5 (mm)</text>
    </g>
  </svg>
);

/* --------------------------------------------------------------- bottom */

const ProgressPane = styled.div`height: 72px; flex: none; background: #fff;`;
const StatusBar = styled.footer`
  display: flex;
  align-items: center;
  gap: 4px;
  height: 23px;
  flex: none;
  padding: 2px 1px 0 4px;
  background: #cdd4db;
`;
const StatusText = styled.span`flex: 1; color: #000;`;
const StatusButton = styled.button`
  display: flex;
  align-items: center;
  justify-content: space-between;
  width: ${(p) => p.$w}px;
  height: 19px;
  padding: 0 8px 0 4px;
  color: #000;
  border: 1px solid ${(p) => (p.$hot ? "#2f6488" : "#707070")};
  border-radius: 2px;
  background: ${(p) =>
    p.$hot
      ? "linear-gradient(#dcf0fb, #b8e0f6 48%, #8ccbf0 52%, #70b8e2)"
      : "linear-gradient(#f4f4f4, #ebebeb 48%, #dcdcdc 52%, #cfcfcf)"};
`;
const Taskbar = styled.div`
  display: flex;
  align-items: flex-end;
  min-width: 0;
  border-top: 1px solid #10181c;
  background: linear-gradient(90deg, #3c4254, #22303c 90px, #234c56 180px, #234c56 440px, #1a2226 520px, #141a1e 680px, #16272c 1300px, #33636a 1400px, #1b3338 1700px, #12191c);
`;
const Orb = styled.span`
  width: 29px;
  height: 6px;
  margin: 0 41px 0 12px;
  border-radius: 14px 14px 0 0;
  background: linear-gradient(#dfe8f0, #7fa0c0);
`;
const Browser = styled.span`
  width: 18px;
  height: 4px;
  margin-right: 22px;
  border-radius: 6px 10px 0 0;
  background: linear-gradient(90deg, #58b0e0, #f0c830 60%);
`;
const TaskItem = styled.span`
  display: flex;
  align-items: flex-end;
  justify-content: center;
  width: ${(p) => p.$w}px;
  height: 7px;
  margin-right: ${(p) => p.$gap}px;
  border: 1px solid #a8b4ba;
  border-bottom: 0;
  border-radius: 2px 2px 0 0;
  background: ${(p) => (p.$active ? "linear-gradient(90deg, #f0f4f4, #c0ccce)" : "linear-gradient(90deg, #9aa6ac, #3c565e)")};
`;
const TaskGlyph = styled.span`
  width: ${(p) => p.$w}px;
  height: ${(p) => p.$h}px;
  background: ${(p) => p.$c};
`;

const MENUS = ["File", "Edit", "View", "Project", "Draw", "Modeler", "HFSS", "Tools", "Window", "Help"];
const TABS = [["Desktop", 71], ["View", 54], ["Draw", 54], ["Model", 62], ["Simulation", 84], ["Results", 66], ["Automation", 90]];

export default function App() {
  return (
    <Screen>
      <GlobalStyle />
      <TopEdge />
      <SideStrip />
      <Window>
        <TitleBar>
          <Icon name="logo" />
          <TitleText>ANSYS Electronics Desktop - Lab14 - SmithChart - 3D Modeler - [Lab14 - SmithChart - Modeler]</TitleText>
          <Caption>
            <CaptionButton aria-label="Minimize"><Icon name="winMin" size={13} /></CaptionButton>
            <CaptionButton aria-label="Restore"><Icon name="winMax" size={13} /></CaptionButton>
            <CaptionButton $close aria-label="Close"><Icon name="winX" size={13} /></CaptionButton>
          </Caption>
        </TitleBar>
        <MenuBar>
          <Icon name="doc" />
          {MENUS.map((m) => <MenuItem key={m}>{m}</MenuItem>)}
          <MdiButtons>
            <MdiButton aria-label="Minimize document"><Icon name="mdiMin" /></MdiButton>
            <MdiButton aria-label="Restore document"><Icon name="mdiMax" /></MdiButton>
            <MdiButton aria-label="Close document"><Icon name="mdiX" /></MdiButton>
          </MdiButtons>
        </MenuBar>
        <RibbonBar />
        <TabBar>
          {TABS.map(([t, w]) => <Tab key={t} $w={w} $active={t === "Draw"}>{t}</Tab>)}
          <HelpIcons>
            <HelpButton>?</HelpButton>
            <svg width="16" height="16" viewBox="0 0 16 16" aria-hidden="true">
              <rect width="16" height="16" rx="2" fill="#f8c818" />
              <path d="M6 1h4l5 14h-4.500L8 6 5.500 15H1z" fill="#222" />
            </svg>
          </HelpIcons>
        </TabBar>
        <Work>
          <Dock>
            <Head title="Project Manager" />
            <TreePane><Tree rows={PROJECT} left={0} size={11} /></TreePane>
            <SplitH />
            <Head title="Properties" />
            <Properties />
          </Dock>
          <SplitV />
          <ModelPane><Tree rows={MODEL} left={1} size={12} /></ModelPane>
          <Viewport><Scene /></Viewport>
        </Work>
        <SplitH />
        <Head title="Progress" />
        <ProgressPane />
        <StatusBar>
          <StatusText>1 objects are selected</StatusText>
          <StatusButton $w={120}><Icon name="messages" size={14} />Show 0 Messages</StatusButton>
          <StatusButton $w={104} $hot><Icon name="progress" size={14} />Hide Progress</StatusButton>
        </StatusBar>
      </Window>
      <Taskbar>
        <Orb />
        <Browser />
        <TaskItem $w={58} $gap={66}><TaskGlyph $w={14} $h={1} $c="#b0a060" /></TaskItem>
        <TaskItem $w={54} $gap={8}><TaskGlyph $w={16} $h={3} $c="linear-gradient(90deg, #3070d0 50%, #f0d840 50%)" /></TaskItem>
        <TaskItem $w={58} $gap={4} />
        <TaskItem $w={54} $gap={0} $active><TaskGlyph $w={32} $h={4} $c="#2a8038" /></TaskItem>
      </Taskbar>
    </Screen>
  );
}
